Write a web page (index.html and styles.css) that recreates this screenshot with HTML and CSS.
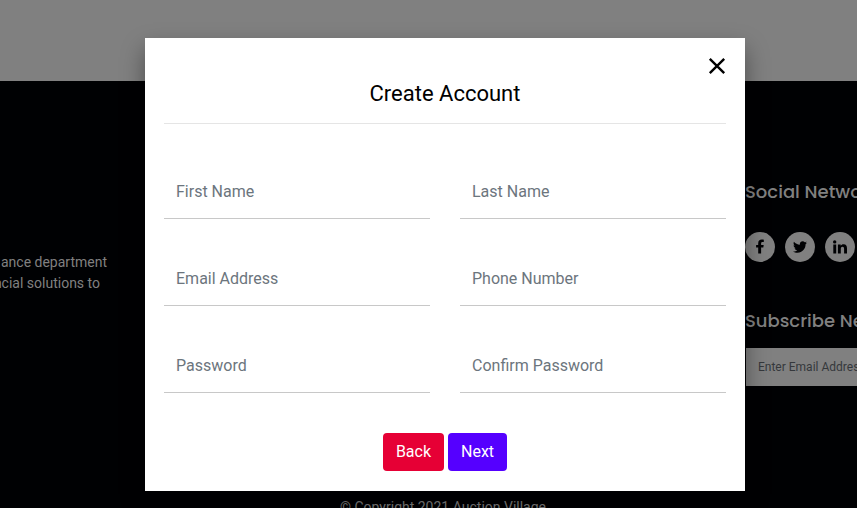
FILE: index.html
```html
<!DOCTYPE html>
<html lang="en">
<head>
<meta charset="utf-8">
<title>Create Account</title>
<link rel="stylesheet" href="styles.css">
</head>
<body>
<div class="page">
  <div class="page-top"></div>
  <footer class="footer">
    <div class="footer-columns">
      <div class="about">
        <p class="about-line">ance department</p>
        <p class="about-line about-line-short">ncial solutions to</p>
      </div>
      <div class="connect">
        <h2 class="footer-title"><span>Social Network</span></h2>
        <div class="socials">
          <span class="social"><svg width="16" height="16" viewBox="0 0 16 16"><path d="M6.200 14.500V8.600H4.100V6h2.100V4.200C6.200 1.900 7.600.6 9.700.6c1 0 2.100.2 2.100.2v2.300h-1.200c-1.200 0-1.500.7-1.500 1.400V6h2.600l-.4 2.600H9.100v5.900z"/></svg></span>
          <span class="social"><svg width="14" height="14" viewBox="0 0 512 512"><path d="M459 152c.3 4.500.3 9.100.3 13.600 0 138.700-105.600 298.600-298.600 298.600-59.500 0-114.700-17.200-161.100-47.100 8.400 1 16.600 1.300 25.300 1.300 49.100 0 94.200-16.600 130.300-44.800-46.100-1-84.800-31.200-98.100-72.800 6.500 1 13 1.600 19.800 1.600 9.400 0 18.800-1.300 27.600-3.600-48.100-9.700-84.100-52-84.100-103v-1.300c14 7.800 30.200 12.700 47.400 13.300-28.300-18.800-46.800-51-46.800-87.400 0-19.500 5.200-37.400 14.300-53 51.700 63.700 129.300 105.300 216.400 109.800-1.600-7.800-2.600-15.900-2.600-24C249 95 296 48 354 48c30.200 0 57.500 12.700 76.700 33.100 23.700-4.500 46.500-13.300 66.600-25.300-7.800 24.400-24.400 44.800-46.100 57.800 21.100-2.300 41.600-8.100 60.400-16.200-14.300 20.800-32.200 39.300-52.600 54.600z"/></svg></span>
          <span class="social"><svg width="14" height="14" viewBox="0 0 14 14"><circle cx="1.700" cy="1.900" r="1.700"/><path d="M.3 4.500h2.900V13.500H.3zM4.900 4.500h2.800v1.200c.5-.9 1.500-1.500 2.800-1.500 2.800 0 3.500 1.700 3.500 4.300v5h-2.900V9.100c0-1.300-.2-2.400-1.600-2.400S7.800 7.700 7.800 9.100v4.400H4.900z"/></svg></span>
        </div>
        <h2 class="footer-title footer-title-news"><span>Subscribe Newsletter</span></h2>
        <div class="email">Enter Email Address</div>
      </div>
    </div>
    <p class="copyright">© Copyright 2021 Auction Village</p>
  </footer>
</div>
<div class="modal">
  <div class="modal-head">
    <button class="close" aria-label="Close"><svg width="18" height="18" viewBox="0 0 18 18"><path d="M1.800 1.800l14.400 14.400M16.200 1.800L1.800 16.200"/></svg></button>
    <h1 class="modal-title">Create Account</h1>
  </div>
  <form class="form">
    <div class="fields">
      <input class="field" type="text" placeholder="First Name">
      <input class="field" type="text" placeholder="Last Name">
      <input class="field" type="text" placeholder="Email Address">
      <input class="field" type="text" placeholder="Phone Number">
      <input class="field" type="password" placeholder="Password">
      <input class="field" type="password" placeholder="Confirm Password">
    </div>
    <div class="actions">
      <button class="btn btn-back" type="button">Back</button>
      <button class="btn btn-next" type="button">Next</button>
    </div>
  </form>
</div>
</body>
</html>
```
FILE: styles.css
```css
* { box-sizing: border-box; }
body {
  margin: 0;
  height: 508px;
  overflow: hidden;
  background: #000103;
  font-family: Roboto, "Liberation Sans", sans-serif;
}
h1, h2, p { margin: 0; font-weight: 400; }
.page { height: 508px; overflow: hidden; }
.page-top { height: 81px; background: #808080; }
.footer { color: #808080; background: #000103; }
.footer-columns {
  display: grid;
  grid-template-columns: 107px 112px;
  justify-content: space-between;
  height: 416px;
}
.about { padding-top: 171px; font-size: 14px; line-height: 21px; }
.about-line { display: flex; justify-content: flex-end; white-space: nowrap; }
.about-line-short { padding-right: 7px; }
.connect { padding-top: 98px; overflow: hidden; }
.footer-title {
  font-family: Poppins, Inter, sans-serif;
  font-size: 18px;
  font-weight: 500;
  line-height: 26px;
  white-space: nowrap;
}
.socials { display: flex; gap: 10px; margin-top: 27px; }
.social {
  display: flex;
  align-items: center;
  justify-content: center;
  width: 30px;
  height: 30px;
  border-radius: 50%;
  background: #808080;
}
.social svg { display: block; fill: #000103; }
.footer-title-news { margin-top: 46px; }
.email {
  width: 200px;
  height: 38px;
  margin: 14px 0 0 1px;
  padding-left: 12px;
  background: #808080;
  color: #35383c;
  font-size: 12px;
  line-height: 38px;
}
.copyright {
  padding-left: 340px;
  font-size: 14px;
  line-height: 21px;
  white-space: nowrap;
}
.modal {
  position: absolute;
  top: 38px;
  left: 145px;
  width: 600px;
  height: 453px;
  padding: 19px;
  background: #fff;
  box-shadow: 0 11px 22px rgba(0,0,0,.4);
}
.modal-head { height: 67px; border-bottom: 1px solid #e5e5e5; }
.close {
  display: block;
  width: 18px;
  height: 18px;
  margin-left: auto;
  padding: 0;
  border: 0;
  background: none;
}
.close svg { display: block; fill: none; stroke: #000; stroke-width: 2.4; }
.modal-title {
  margin-top: 5px;
  font-size: 22px;
  line-height: 28px;
  text-align: center;
}
.fields {
  display: grid;
  grid-template-columns: 266px 266px;
  gap: 32px 30px;
  padding-top: 40px;
}
.field {
  width: 100%;
  height: 55px;
  padding: 0 12px;
  border: 0;
  border-bottom: 1px solid #c8c8c8;
  background: transparent;
  font: 16px/24px Roboto, sans-serif;
  outline: 0;
}
.field::placeholder { color: #6c757d; opacity: 1; }
.actions { display: flex; justify-content: center; gap: 4px; margin-top: 40px; }
.btn {
  height: 38px;
  padding: 0 13px;
  border: 0;
  border-radius: 4px;
  color: #fff;
  font: 16px/24px Roboto, sans-serif;
}
.btn-back { background: #e60035; }
.btn-next { background: #5500ff; }
```
